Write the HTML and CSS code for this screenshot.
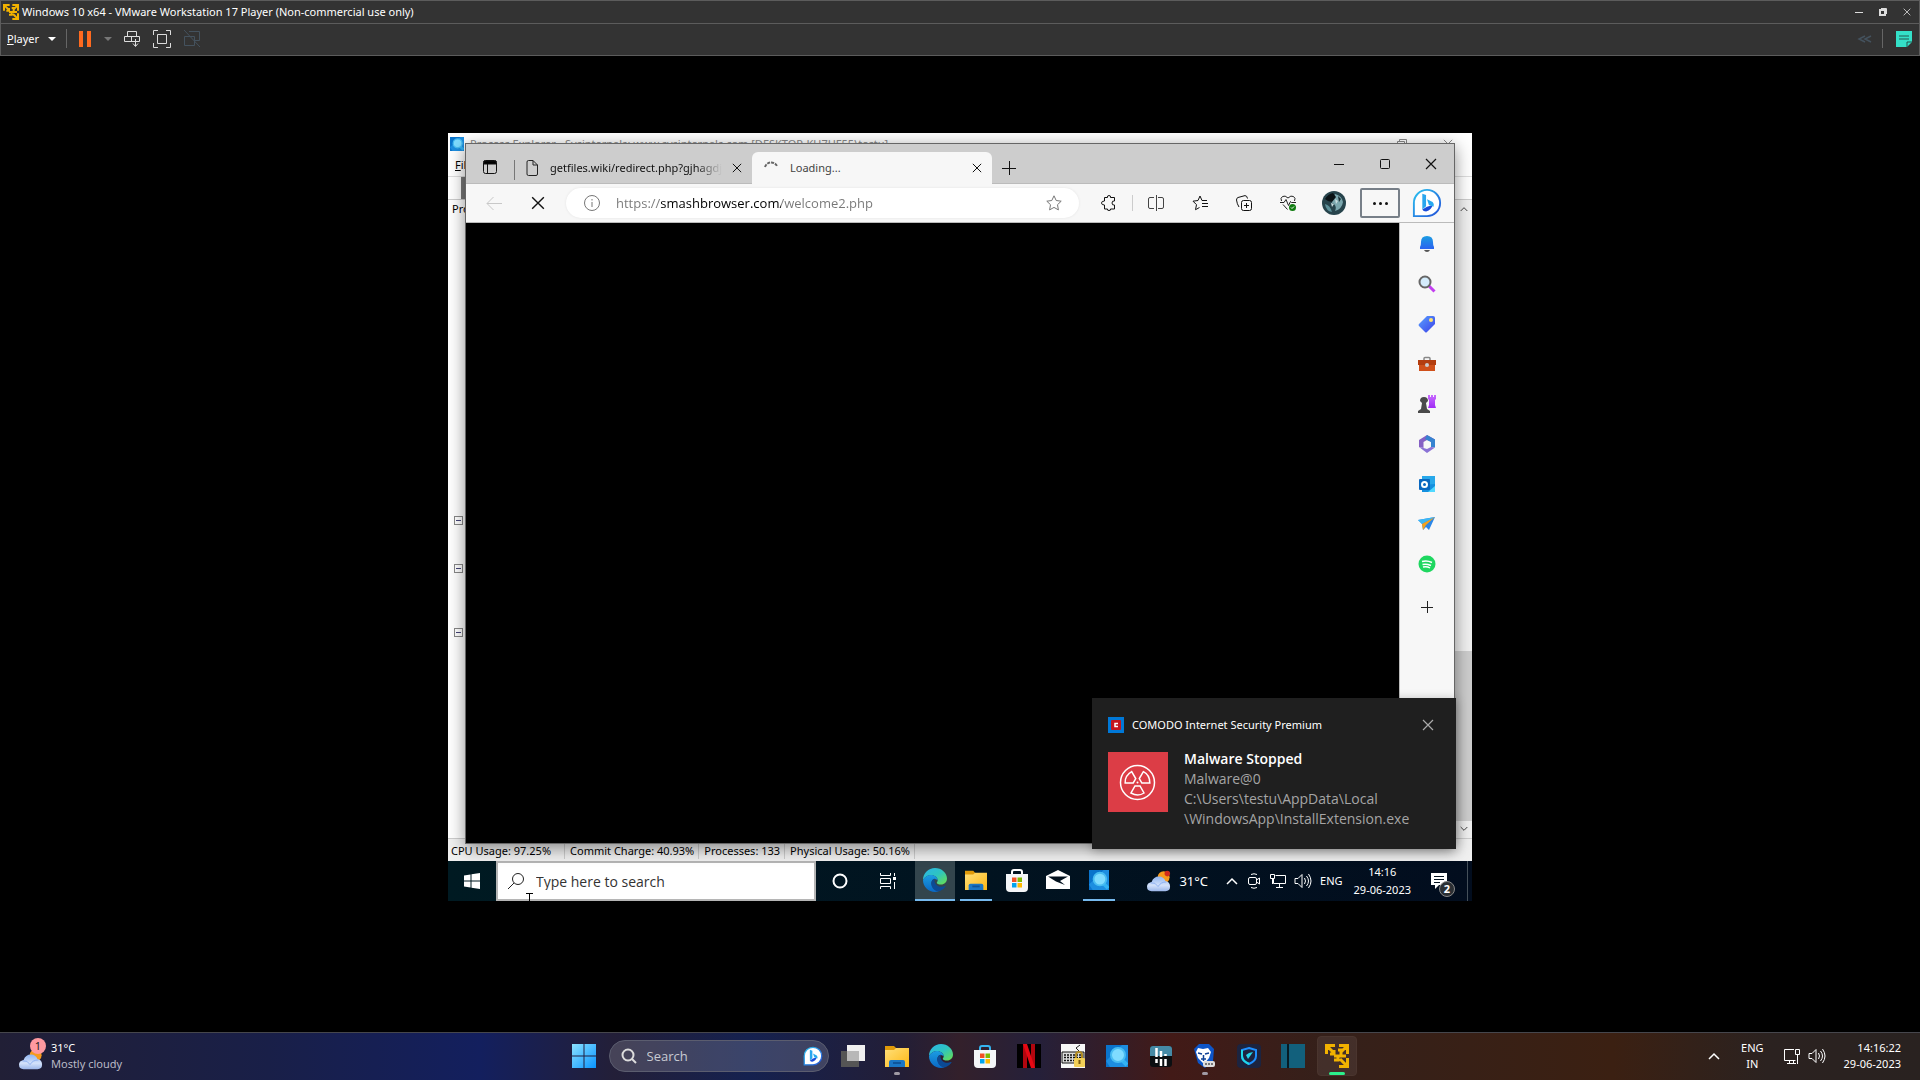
FILE: index.html
```html
<!DOCTYPE html>
<html lang="en">
<head>
    <meta charset="UTF-8">
    <meta name="viewport" content="width=device-width, initial-scale=1.0">
    <title>Windows 10 x64 - VMware Workstation 17 Player</title>
    <link rel="stylesheet" href="styles.css">
</head>
<body>
    <!-- Shared icons -->
    <svg class="sprite" aria-hidden="true">
        <defs>
            <linearGradient id="gTeal" x1="0" y1="0" x2="1" y2="1"><stop offset="0" stop-color="#2bb5e8"/><stop offset=".5" stop-color="#2ec4c0"/><stop offset="1" stop-color="#6be04a"/></linearGradient>
            <linearGradient id="gBlue" x1="0" y1="0" x2="0" y2="1"><stop offset="0" stop-color="#1b9de2"/><stop offset="1" stop-color="#0a68c4"/></linearGradient>
            <linearGradient id="gBell" x1="0" y1="0" x2="0" y2="1"><stop offset="0" stop-color="#1b9de2"/><stop offset="1" stop-color="#2b62f0"/></linearGradient>
            <linearGradient id="gBing" x1="0" y1="0" x2="1" y2="1"><stop offset="0" stop-color="#2bc4f0"/><stop offset="1" stop-color="#2350d8"/></linearGradient>
            <linearGradient id="gWin" x1="0" y1="0" x2="1" y2="1"><stop offset="0" stop-color="#8be2ff"/><stop offset="1" stop-color="#0994ff"/></linearGradient>
            <linearGradient id="gCloud" x1="0" y1="0" x2="0" y2="1"><stop offset="0" stop-color="#8fb4f0"/><stop offset=".6" stop-color="#d3e2fb"/><stop offset="1" stop-color="#9cb7ea"/></linearGradient>
            <linearGradient id="gFolder" x1="0" y1="0" x2="1" y2="1"><stop offset="0" stop-color="#ffe07a"/><stop offset="1" stop-color="#fdb714"/></linearGradient>
            <linearGradient id="gTag" x1="0" y1="0" x2="1" y2="1"><stop offset="0" stop-color="#5aa2ff"/><stop offset="1" stop-color="#3b3fe8"/></linearGradient>
            <linearGradient id="gPink" x1="0" y1="0" x2="0" y2="1"><stop offset="0" stop-color="#c86bff"/><stop offset="1" stop-color="#a02bf5"/></linearGradient>
        </defs>
        <symbol id="vmware" viewBox="0 0 24 24">
            <path d="M1.500 10V1.500H10M14 1.500h8.500V10M22.500 14v8.500H14M2 2l7 7M22 2l-6 6M22 22l-7-7M5 10H9V6M9 12h4v4H9M13 6h3v6h5" fill="none" stroke="#f2b200" stroke-width="3"/>
        </symbol>
        <symbol id="edge" viewBox="0 0 24 24">
            <path d="M0 12C0 5 5.500 0 12 0s12 5 12 10.500c0 3.500-2.500 6-6 6-2.500 0-4.200-.8-4.200-1.800 0-.6.9-1 .9-2.500C14.700 9.500 11.500 7 8 7S1.500 9 0 12z" fill="url(#gTeal)"/>
            <path d="M0 12C1.500 9 4.500 7 8 7c3.500 0 6.700 2.500 6.700 5.200C10 9 8 13 8.500 16c.6 4 4 6.800 7.500 7.200C8 26 0 20 0 12z" fill="url(#gBlue)"/>
            <path d="M12 10.500c-3 .9-4.300 4-3.400 7.200 1.200 4.300 5.400 6.300 8.400 5.300 2.500-.9 4.500-2.500 5.500-4.400.2-.6-.2-.7-.6-.5-3 1.400-6.900.8-8.900-1.600-1.700-2-1.900-4.200-1-6z" fill="#0c4a94"/>
        </symbol>
        <symbol id="store" viewBox="0 0 24 24">
            <path d="M7 7V4q0-2 2-2h6q2 0 2 2v3" fill="none" stroke="currentColor" stroke-width="2"/>
            <path d="M1 6h22v14q0 4-4 4H5q-4 0-4-4z" fill="#f4f6f8"/>
            <path d="M7 9.500h4.500V14H7z" fill="#f25022"/><path d="M12.500 9.500H17V14h-4.500z" fill="#7fba00"/>
            <path d="M7 15h4.500v4.500H7z" fill="#00a4ef"/><path d="M12.500 15H17v4.500h-4.500z" fill="#ffb900"/>
        </symbol>
        <symbol id="folder" viewBox="0 0 24 24">
            <path d="M0 2h9l2 2v4H0z" fill="#e09a09"/><path d="M0 6h9l2-2h13v19H0z" fill="url(#gFolder)"/>
            <path d="M4 23v-5q0-2 2-2h12q2 0 2 2v5z" fill="#1a76c5"/><path d="M8 19h8" stroke="#0e559b" stroke-width="2"/>
        </symbol>
        <symbol id="procexp" viewBox="0 0 22 22">
            <path d="M0 0h22v22H0z" fill="#0a74cc"/><path d="M0 16L16 0H22v22H4z" fill="#1d8ee0"/>
            <path d="M15 14l6 6" stroke="#33b3f3" stroke-width="4"/><circle cx="12" cy="10" r="7" fill="#7fdcff" stroke="#48bdf2" stroke-width="2"/>
        </symbol>
        <symbol id="cloud" viewBox="0 0 26 24">
            <circle cx="18" cy="8" r="6.500" fill="#f79a1c"/>
            <path d="M5 23q-5 0-5-5 0-4 5-5 2-6 8-6 5 0 7 5 5 1 5 6 0 5-5 5z" fill="url(#gCloud)"/>
            <path d="M4 14q5-1 8 4 3-5 9-5" fill="none" stroke="#8aaef0"/>
        </symbol>
        <symbol id="bing" viewBox="0 0 32 32">
            <path d="M2 30V16A14 14 0 1 1 16 30z" fill="#fff" stroke="url(#gBing)" stroke-width="2"/>
            <path d="M11 6l4 1.500v12l-4 3.500z" fill="#2aa6ee"/><path d="M11 23l5-3 6-2q-1 5-7 7-3 0-4-2z" fill="#1a4bd8"/><path d="M16 12l6 3q2 2 1 5l-5-2z" fill="#27a9ef"/>
        </symbol>
        <symbol id="speaker" viewBox="0 0 18 16">
            <path d="M1 5.500h3l4-4v13l-4-4H1zM10.500 5q2 3 0 6M12.500 3q4 5 0 10M14.500 1q5 7 0 14" fill="none" stroke="currentColor"/>
        </symbol>
        <symbol id="close" viewBox="0 0 12 12"><path d="M1 1l10 10M11 1L1 11" fill="none" stroke="currentColor" stroke-width="1.200"/></symbol>
        <symbol id="up" viewBox="0 0 12 8"><path d="M1 7l5-5 5 5" fill="none" stroke="currentColor" stroke-width="1.500"/></symbol>
    </svg>

    <header class="player">
        <div class="player-title">
            <svg class="i16"><use href="#vmware"/></svg>
            <h1>Windows 10 x64 - VMware Workstation 17 Player (Non-commercial use only)</h1>
            <div class="player-controls">
                <button aria-label="Minimize"><svg class="i8" viewBox="0 0 8 8"><path d="M0 4.500h8" stroke="#ddd"/></svg></button>
                <button aria-label="Restore"><svg class="i8" viewBox="0 0 8 8"><path d="M1 2h5v5H1z" fill="none" stroke="#ddd" stroke-width="2"/><path d="M2 .5h5.500V6" fill="none" stroke="#ddd"/></svg></button>
                <button aria-label="Close"><svg class="i8"><use href="#close"/></svg></button>
            </div>
        </div>
        <nav class="player-bar">
            <button class="player-menu"><u>P</u>layer <i class="caret"></i></button>
            <span class="divider"></span>
            <button class="pause" aria-label="Suspend"><span></span><span></span></button>
            <button class="drop" aria-label="Power options"><i class="caret dim"></i></button>
            <button aria-label="Send Ctrl+Alt+Del"><svg class="i18" viewBox="0 0 18 18"><path d="M4.500 6.500v-5h9v5M1.500 11.500v-5h15v5zM8.500 6.500v5M12.500 9v7M10 13.500l2.500 3 2.500-3" fill="none" stroke="#ddd"/></svg></button>
            <button aria-label="Full screen"><svg class="i18" viewBox="0 0 18 18"><path d="M.5 5V.5H5M13 .5h4.500V5M17.500 13v4.500H13M5 17.500H.5V13M4.500 4.500h9v9h-9z" fill="none" stroke="#ddd"/></svg></button>
            <button aria-label="Unity"><svg class="i18" viewBox="0 0 18 18"><path d="M6 1.500h10.500v9h-5M1.500 6.500h10v9h-10zM1 0l16 17" fill="none" stroke="#44525e"/></svg></button>
            <button class="push" aria-label="Devices"><svg class="i16" viewBox="0 0 16 16"><path d="M8 5L2 8l6 3M14 5L8 8l6 3" fill="none" stroke="#44525e" stroke-width="1.500"/></svg></button>
            <span class="divider"></span>
            <button aria-label="Messages"><svg class="i16" viewBox="0 0 16 16"><path d="M0 0h16v11l-5 5H0z" fill="#34e0c8"/><path d="M3 5h10M3 8h10M11 16v-5h5" fill="none" stroke="#22574f"/></svg></button>
        </nav>
    </header>

    <main class="stage">
        <div class="guest">
            <section class="procexp">
                <div class="px-title">
                    <svg class="i14"><use href="#procexp"/></svg>
                    <span>Process Explorer - Sysinternals: www.sysinternals.com [DESKTOP-KU7HF55\testu]</span>
                    <svg class="i10" viewBox="0 0 10 10"><path d="M.5 2.500h7v7h-7zM2.500 2V.5h7v7H8" fill="none" stroke="#888"/></svg>
                    <svg class="i10"><use href="#close"/></svg>
                </div>
                <div class="px-menu"><u>F</u>ile</div>
                <div class="px-tools"></div>
                <div class="px-body">
                    <div class="px-tree">
                        <span class="px-head">Process</span>
                        <button class="twig" aria-label="Collapse"></button>
                        <button class="twig" aria-label="Collapse"></button>
                        <button class="twig" aria-label="Collapse"></button>
                    </div>
                    <div class="px-scroll">
                        <svg class="i8"><use href="#up"/></svg>
                        <span class="px-thumb"></span>
                        <svg class="i8 down"><use href="#up"/></svg>
                    </div>
                </div>
                <div class="px-status">
                    <span>CPU Usage: 97.25%</span><span>Commit Charge: 40.93%</span><span>Processes: 133</span><span>Physical Usage: 50.16%</span>
                </div>
            </section>

            <section class="browser">
                <div class="tabs">
                    <button class="workspaces" aria-label="Tab actions"><svg class="i14" viewBox="0 0 14 14"><rect x=".5" y=".5" width="13" height="13" rx="2" fill="none" stroke="#111"/><path d="M1 1h12v3H1zM4.500 4v9" stroke="#111"/></svg></button>
                    <div class="tab">
                        <svg class="doc" viewBox="0 0 12 16"><path d="M1 2q0-1.500 1.500-1.500H7L11.500 5v9q0 1.500-1.500 1.500H2.500Q1 15.500 1 14zM7 .5V5h4.500" fill="none" stroke="#222"/></svg>
                        <span class="tab-name fade">getfiles.wiki/redirect.php?gjhagdj</span>
                        <button aria-label="Close tab"><svg class="i10"><use href="#close"/></svg></button>
                    </div>
                    <div class="tab active">
                        <svg class="spinner" viewBox="0 0 14 14"><path d="M1 6A6.500 6.500 0 0 1 13 5" fill="none" stroke="#666" stroke-width="2" stroke-dasharray="3 1"/></svg>
                        <span class="tab-name">Loading...</span>
                        <button aria-label="Close tab"><svg class="i10"><use href="#close"/></svg></button>
                    </div>
                    <button class="new-tab" aria-label="New tab"><svg class="i14" viewBox="0 0 14 14"><path d="M7.500 0v14M0 7.500h14" stroke="#111"/></svg></button>
                    <div class="win-controls">
                        <button aria-label="Minimize"><svg class="i10" viewBox="0 0 10 10"><path d="M0 5.500h10" stroke="#111"/></svg></button>
                        <button aria-label="Maximize"><svg class="i10" viewBox="0 0 10 10"><rect x=".5" y=".5" width="9" height="9" rx="1" fill="none" stroke="#111"/></svg></button>
                        <button aria-label="Close"><svg class="i12"><use href="#close"/></svg></button>
                    </div>
                </div>
                <div class="toolbar">
                    <button class="nav back" aria-label="Back"><svg class="i16" viewBox="0 0 16 16"><path d="M16 8.500H1M7.500 2L1 8.500 7.500 15" fill="none" stroke="#c8c8c8"/></svg></button>
                    <button class="nav" aria-label="Stop"><svg class="i14"><use href="#close"/></svg></button>
                    <div class="address">
                        <svg class="i16" viewBox="0 0 16 16"><circle cx="8" cy="8" r="7.500" fill="none" stroke="#777"/><path d="M8 7v5M8 4v1.500" stroke="#777"/></svg>
                        <input class="url" type="text" aria-label="Address" value="https://smashbrowser.com/welcome2.php">
                        <button aria-label="Favorite"><svg class="i16" viewBox="0 0 16 16"><path d="M8 .8l2.200 4.700 5 .7-3.700 3.500.9 5.200L8 12.400l-4.400 2.500.9-5.200L.8 6.200l5-.7z" fill="none" stroke="#777"/></svg></button>
                    </div>
                    <button aria-label="Extensions"><svg class="i16" viewBox="0 0 16 16"><path d="M3.500 2.500h3q-.5-2 1.500-2t1.500 2h4V6q-2.500-.5-2.500 2t2.500 2v4h-4q.5 1.500-1.500 1.500T6.500 14h-3v-4Q.5 10 .5 8t3-2z" fill="none" stroke="#111"/></svg></button>
                    <span class="bar"></span>
                    <button aria-label="Split screen"><svg class="i16" viewBox="0 0 16 16"><path d="M6 2.500H2q-1.500 0-1.500 1.500v8q0 1.500 1.500 1.500h4M10 2.500h4q1.500 0 1.500 1.500v8q0 1.500-1.500 1.500h-4M8.500 0v16" fill="none" stroke="#444"/></svg></button>
                    <button aria-label="Favorites"><svg class="i16" viewBox="0 0 16 16"><path d="M15 5.500h-5L8 1 6 5.500l-5 .7 3.500 3.500-1 5 4-2.200M10 8.500h6M10 11.500h6" fill="none" stroke="#111"/></svg></button>
                    <button aria-label="Collections"><svg class="i16" viewBox="0 0 16 16"><rect x="5.500" y="5.500" width="10" height="10" rx="2" fill="none" stroke="#111"/><path d="M10.500 8v5M8 10.500h5M3 12q-2-3-2.500-7Q.5 3 2 2.500L9 .6q2 0 2.500 2.900" fill="none" stroke="#111"/></svg></button>
                    <button aria-label="Browser essentials"><svg class="i16" viewBox="0 0 16 16"><path d="M1.500 6Q0 3 2.500 1.500T8 3q3-3 5.500-1.500T14.500 6M0 7.500h4l2-3 2.500 6 2-4 1 1H16M3 9.500l4.500 5" fill="none" stroke="#222"/><circle cx="12.500" cy="12.500" r="3.500" fill="#107c10"/><path d="M11 12.500l1 1 2-2" fill="none" stroke="#fff"/></svg></button>
                    <button class="profile" aria-label="Profile"><svg class="i24" viewBox="0 0 24 24"><circle cx="12" cy="12" r="12" fill="#27444c"/><path d="M13 3q7 2 8 8-1 7-8 9 2-4-1-7-4-2-2-5z" fill="#7ba7ae"/><path d="M3 8q3-5 8-6l3 4-4 5-4-1z" fill="#0a1215"/><path d="M3 13q5 1 7 8-6-1-7-8z" fill="#5d919a"/><path d="M13 8l3 2-2 3zM9 12l3 1-2 3z" fill="#c9dcdf"/><path d="M16 5l3 3-2 3z" fill="#1a2e33"/></svg></button>
                    <button class="more" aria-label="Settings and more"><span></span><span></span><span></span></button>
                    <button class="discover" aria-label="Discover"><svg class="i30"><use href="#bing"/></svg></button>
                </div>
                <div class="view">
                    <div class="web-page"></div>
                    <aside class="sidebar">
                        <button aria-label="Notifications"><svg class="i18" viewBox="0 0 18 18"><path d="M2 12q1-1 1-5 0-6 6-6t6 6q0 4 1 5v2H2z" fill="url(#gBell)"/><path d="M6 15h6q-1 2-3 2t-3-2z" fill="#555"/></svg></button>
                        <button aria-label="Search"><svg class="i18" viewBox="0 0 18 18"><path d="M11 11l5.500 5.500" stroke="#c23ef0" stroke-width="3"/><circle cx="7" cy="7" r="5.500" fill="#d4ecfb" stroke="#666" stroke-width="2"/></svg></button>
                        <button aria-label="Shopping"><svg class="i18" viewBox="0 0 18 18"><path d="M1 9l8-8h6q2 0 2 2v6l-8 8q-1 1-2 0l-6-6q-1-1 0-2z" fill="url(#gTag)"/><circle cx="13" cy="5" r="2" fill="#ffe36e"/></svg></button>
                        <button aria-label="Tools"><svg class="i18" viewBox="0 0 18 18"><path d="M6 6V3.500q0-1 1-1h4q1 0 1 1V6" fill="none" stroke="#888" stroke-width="1.500"/><path d="M1 6h16v10H1z" fill="#d0501a"/><path d="M0 5h18v5H0z" fill="#b33d0f"/><circle cx="9" cy="10" r="2" fill="#ccc"/></svg></button>
                        <button aria-label="Games"><svg class="i18" viewBox="0 0 18 18"><path d="M10 0h2v2h1V0h2v2h1V0h2v4l-1 1v5l1 3h-8l1-3V5l-1-1z" fill="url(#gPink)"/><path d="M2 6a4 4 0 1 1 8 0L8 8l1 6 3 2v2H0v-2l3-2 1-6z" fill="#4a4a4a"/></svg></button>
                        <button aria-label="Microsoft 365"><svg class="i18" viewBox="0 0 18 18"><path d="M9 0l8 4.500v5L11.500 6 9 5 5.500 7v6L1 12V5z" fill="#8560c4"/><path d="M9 0l8 4.500v8L13 12V7L7 4z" fill="#3683d0"/><path d="M1 12l4.500 1L9 14l4-2 4 .5L9 18z" fill="#8a72d6"/></svg></button>
                        <button aria-label="Outlook"><svg class="i18" viewBox="0 0 18 18"><path d="M4 1h13v16H4z" fill="#28a8ea"/><path d="M4 10l13-1v8H4z" fill="#1490df"/><path d="M10 17l7-6v6z" fill="#50d9ff"/><rect x="1" y="4" width="11" height="11" rx="1" fill="#0a68c0"/><circle cx="6.500" cy="9.500" r="2.500" fill="none" stroke="#fff" stroke-width="2"/></svg></button>
                        <button aria-label="Drop"><svg class="i18" viewBox="0 0 18 18"><path d="M0 5l17-3-6 13-3-3-3 3-1-6z" fill="#2a86e8"/><path d="M0 5l17-3L4 9z" fill="#3cb8f5"/><path d="M4 9l13-7-9 8-3 5z" fill="#f5a21c"/></svg></button>
                        <button aria-label="Spotify"><svg class="i18" viewBox="0 0 18 18"><circle cx="9" cy="9" r="8.500" fill="#1ed760"/><path d="M4 6.500q5-1.500 10 1M4.500 9.500q4-1 8.500 1M5 12q4-1 7 1" fill="none" stroke="#fff" stroke-width="1.500"/></svg></button>
                        <button class="add" aria-label="Customize"><svg class="i12" viewBox="0 0 12 12"><path d="M6.500 0v12M0 6.500h12" stroke="#222"/></svg></button>
                    </aside>
                </div>
            </section>

            <section class="toast">
                <div class="toast-head">
                    <svg class="i16" viewBox="0 0 16 16"><path d="M0 0h16v16H0z" fill="#0078d7"/><rect x="3" y="3" width="10" height="10" rx="1" fill="#c4161c"/><path d="M10 6.500H7v3h3" fill="none" stroke="#fff" stroke-width="1.500"/></svg>
                    <span>COMODO Internet Security Premium</span>
                    <button aria-label="Dismiss"><svg class="i12"><use href="#close"/></svg></button>
                </div>
                <div class="toast-body">
                    <svg class="i60" viewBox="0 0 60 60"><path d="M0 0h60v60H0z" fill="#dc3d46"/><g fill="none" stroke="#fff" stroke-width="1.500"><circle cx="29.500" cy="30.500" r="17"/><g id="blade"><path d="M27 34h5l4 7q-6 4-13 0z"/></g><use href="#blade" transform="rotate(120 29.500 30.500)"/><use href="#blade" transform="rotate(240 29.500 30.500)"/></g><circle cx="29.500" cy="30.500" r="1" fill="#fff"/></svg>
                    <div>
                        <h2>Malware Stopped</h2>
                        <p>Malware@0</p>
                        <p>C:\Users\testu\AppData\Local<br>\WindowsApp\InstallExtension.exe</p>
                    </div>
                </div>
            </section>

            <footer class="guest-bar">
                <button class="g-start" aria-label="Start"><svg class="i16" viewBox="0 0 16 16"><path d="M0 2.500l6.500-1V7.500H0zM7.500 1.300L16 0v7.500H7.500zM0 8.500h6.500v6L0 13.500zM7.500 8.500H16V16l-8.500-1.300z" fill="#fff"/></svg></button>
                <label class="g-search">
                    <svg class="i16" viewBox="0 0 16 16"><circle cx="10" cy="6" r="5.500" fill="none" stroke="#222"/><path d="M6 10l-6 6" stroke="#222"/></svg>
                    <input type="text" aria-label="Type here to search" placeholder="Type here to search">
                </label>
                <button class="g-wide" aria-label="Cortana"><svg class="i16" viewBox="0 0 16 16"><circle cx="8" cy="8" r="6.500" fill="none" stroke="#fff" stroke-width="2"/></svg></button>
                <button class="g-wide" aria-label="Task View"><svg class="i16" viewBox="0 0 16 16"><path d="M.5 0v2.500h10V0M.5 5.500h10v5H.5zM.5 16v-2.500h10V16M14.500 0v3M14.500 9v7" fill="none" stroke="#fff"/><path d="M13 4h3v3h-3z" fill="#fff"/></svg></button>
                <button class="g-app current" aria-label="Microsoft Edge"><svg class="i24"><use href="#edge"/></svg></button>
                <button class="g-app open" aria-label="File Explorer"><svg class="i22"><use href="#folder"/></svg></button>
                <button class="g-app" aria-label="Microsoft Store"><svg class="i24"><use href="#store"/></svg></button>
                <button class="g-app" aria-label="Mail"><svg class="i24" viewBox="0 0 24 24"><path d="M0 8l12-6 12 6v13H0z" fill="#fff"/><path d="M2 8.500h20L14 13l5 4-9-3.500z" fill="#02111e"/></svg></button>
                <button class="g-app open" aria-label="Process Explorer"><svg class="i20"><use href="#procexp"/></svg></button>
                <div class="g-tray">
                    <button class="weather"><svg class="i24" viewBox="0 0 26 24"><use href="#cloud"/><circle cx="22" cy="4" r="3" fill="#d02b1c"/></svg>31°C</button>
                    <svg class="i12"><use href="#up"/></svg>
                    <svg class="i16" viewBox="0 0 16 16"><rect x="2.500" y="4.500" width="8" height="7" rx="1.500" fill="none" stroke="#fff"/><path d="M10.500 7l3-2v6l-3-2M5 1.500q3-1.500 6 0M5 14.500q3 1.500 6 0" fill="none" stroke="#fff"/></svg>
                    <svg class="i16" viewBox="0 0 16 16"><path d="M5.500 2.500h10v8h-12V6M9.500 11v3M6 14.500h7M.5 1.500h4v4h-4zM2.500 5v6" fill="none" stroke="#fff"/></svg>
                    <svg class="speaker"><use href="#speaker"/></svg>
                    <span>ENG</span>
                    <time>14:16<br>29-06-2023</time>
                    <button class="alerts" aria-label="Notifications"><svg class="i16" viewBox="0 0 16 16"><path d="M0 0h16v12H8l-4 4v-4H0z" fill="#fff"/><path d="M3 3.500h10M3 6.500h10M3 9.500h6" stroke="#02111e"/></svg><b class="badge">2</b></button>
                </div>
            </footer>
            <svg class="text-cursor" viewBox="0 0 7 8"><path d="M0 .5h7M3.500 0v8" stroke="#000"/></svg>
        </div>
    </main>

    <footer class="host-bar">
        <button class="host-weather">
            <span class="cloud-box"><svg class="i24"><use href="#cloud"/></svg><b>1</b></span>
            <span>31°C<br><span class="muted">Mostly cloudy</span></span>
        </button>
        <div class="host-apps">
            <button aria-label="Start"><svg class="i24" viewBox="0 0 24 24"><path d="M0 0h11.500v11.500H0zM12.500 0H24v11.500H12.500zM0 12.500h11.500V24H0zM12.500 12.500H24V24H12.500z" fill="url(#gWin)"/></svg></button>
            <label class="host-search">
                <svg class="i16" viewBox="0 0 16 16"><circle cx="7" cy="7" r="5.500" fill="none" stroke="#ddd" stroke-width="2"/><path d="M11 11l4 4" stroke="#ddd" stroke-width="2"/></svg>
                <input type="text" aria-label="Search" placeholder="Search">
                <svg class="i20"><use href="#bing"/></svg>
            </label>
            <button aria-label="Task View"><svg class="i24" viewBox="0 0 24 24"><path d="M6 1h18v16H6z" fill="#f0f0f0"/><path d="M0 7h18v16H0z" fill="#555"/><path d="M6 7h12v10H6z" fill="#b8b8b8"/></svg></button>
            <button class="running" aria-label="File Explorer"><svg class="i24"><use href="#folder"/></svg></button>
            <button aria-label="Microsoft Edge"><svg class="i24"><use href="#edge"/></svg></button>
            <button class="store" aria-label="Microsoft Store"><svg class="i24"><use href="#store"/></svg></button>
            <button aria-label="Netflix"><svg class="i24" viewBox="0 0 24 24"><path d="M0 0h24v24H0z"/><path d="M6 0h4v24H6zM14 0h4v24h-4z" fill="#b1060f"/><path d="M6 0h4l8 24h-4z" fill="#e50914"/></svg></button>
            <button aria-label="Keyboard lock"><svg class="i24" viewBox="0 0 24 24"><path d="M0 0h24v24H0z" fill="#f8f8f8"/><path d="M19 1l-4 3 3 3" fill="none" stroke="#222"/><path d="M1 8h22v11H1z" fill="#ddd" stroke="#111"/><path d="M3 11h18M3 13.500h18M3 16.500h12" stroke="#111" stroke-width="1.500" stroke-dasharray="2 1"/><path d="M15 15v-4q0-3 3-3t3 3v4" fill="none" stroke="#b08a20" stroke-width="2"/><rect x="13" y="14" width="11" height="9" rx="1" fill="#f2cf57"/><path d="M18.500 16v4" stroke="#7a5a10" stroke-width="2"/></svg></button>
            <button aria-label="Process Explorer"><svg class="i22"><use href="#procexp"/></svg></button>
            <button aria-label="Audio mixer"><svg class="i22" viewBox="0 0 22 22"><rect y="1" width="22" height="21" rx="3" fill="#0b0f12"/><path d="M0 11V4q0-3 3-3h16q3 0 3 3v7z" fill="#458aa6"/><path d="M6.500 3v9M11 6v6M15.500 9v2M6.500 14v4M11 14v7M15.500 14v7" stroke="#fff" stroke-width="2.500"/></svg></button>
            <button class="running" aria-label="Brave Beta"><svg class="i24" viewBox="0 0 24 24"><path d="M6 0h10l5 5-1 12-8 7-7-5L1 5z" fill="#0d55c8"/><path d="M5 4l5 1 5-1 3 4-2 6-5 6-6-6-2-6z" fill="#fff"/><path d="M5 9l4 1M16 9l-4 1M8 15h5M10.500 11v6" stroke="#0d3f94" stroke-width="1.500"/><rect x="10" y="17" width="12" height="6" rx="2" fill="#ddd"/><path d="M12 20h8" stroke="#777" stroke-width="2" stroke-dasharray="2 1"/></svg></button>
            <button aria-label="Security"><svg class="i24" viewBox="0 0 24 24"><rect width="24" height="24" rx="4" fill="#1c2440"/><path d="M12 4l7 2v6q0 5-7 8-7-3-7-8V6z" fill="none" stroke="#1f8fff" stroke-width="2"/><path d="M5 6v6q0 5 7 8" fill="none" stroke="#1fd8e8" stroke-width="2"/><path d="M9 11l2 4 5-7-4 1z" fill="#25d6ea"/></svg></button>
            <button aria-label="Panels"><svg class="i24" viewBox="0 0 24 24"><path d="M0 0h24v24H0z" fill="#12607c"/><path d="M7 0v24" stroke="#061b24" stroke-width="2"/></svg></button>
            <button class="running focused" aria-label="VMware Player"><svg class="i24"><use href="#vmware"/></svg></button>
        </div>
        <div class="host-tray">
            <svg class="i12"><use href="#up"/></svg>
            <span class="lang">ENG<br>IN</span>
            <svg class="i16" viewBox="0 0 16 16"><path d="M10 1.500H.5v11h11M3 15.500h9M5.500 13v2M9.500 13v2M11.500 1.500h4v5h-4zM13.500 7v9" fill="none" stroke="#fff"/></svg>
            <svg class="speaker"><use href="#speaker"/></svg>
            <time>14:16:22<br>29-06-2023</time>
        </div>
    </footer>
</body>
</html>
```
FILE: styles.css
```css
* {
    margin: 0;
    padding: 0;
    box-sizing: border-box;
}
body {
    display: flex;
    flex-direction: column;
    min-height: 100vh;
    background-color: #000;
    color: #fff;
    font-family: "Noto Sans", "Open Sans", sans-serif;
    font-size: 11px;
    line-height: 16px;
}
button, input {
    border: 0;
    background: none;
    color: inherit;
    font: inherit;
    outline: 0;
}
button {
    display: flex;
    align-items: center;
    justify-content: center;
    flex-shrink: 0;
}
svg { display: block; flex-shrink: 0; }
.sprite { position: absolute; width: 0; height: 0; }
.i8 { width: 8px; height: 8px; }
.i10 { width: 10px; height: 10px; }
.i12 { width: 12px; height: 12px; }
.i14 { width: 14px; height: 14px; }
.i16 { width: 16px; height: 16px; }
.i18 { width: 18px; height: 18px; }
.i20 { width: 20px; height: 20px; }
.i22 { width: 22px; height: 22px; }
.i24 { width: 24px; height: 24px; }
.i30 { width: 30px; height: 30px; }
.i60 { width: 60px; height: 60px; }
.speaker { width: 18px; height: 16px; }

/* VMware Player frame */
.player {
    background-color: #333;
    border: 1px solid #5c5c5c;
}
.player-title {
    display: flex;
    align-items: center;
    gap: 3px;
    height: 22px;
    padding-left: 2px;
}
h1 {
    font-size: 11px;
    font-weight: 400;
}
.player-controls {
    display: flex;
    margin-left: auto;
}
.player-controls button { width: 24px; height: 22px; color: #ddd; }
.player-bar {
    display: flex;
    align-items: center;
    height: 32px;
    border-top: 1px solid #5c5c5c;
    padding: 0 1px 2px 6px;
}
.player-bar button { width: 30px; height: 28px; }
.player-bar .player-menu { width: auto; margin-right: 10px; }
.caret {
    margin-left: 9px;
    border: 4px solid transparent;
    border-top-color: #fff;
    border-bottom: 0;
}
.caret.dim { margin: 0; border-top-color: #777; }
.divider { width: 1px; height: 19px; background-color: #666; }
.player-bar .pause { width: 36px; gap: 4px; }
.pause span { width: 4px; height: 16px; background-color: #ff6a1f; }
.player-bar .drop { width: 10px; margin-right: 4px; }
.player-bar .push { margin-left: auto; width: 34px; }
.player-bar button:last-child { width: 28px; margin-left: 7px; }

/* Guest display */
.stage {
    flex: 1;
    display: flex;
    align-items: center;
    justify-content: center;
    padding-bottom: 54px;
}
.guest {
    position: relative;
    display: flex;
    flex-direction: column;
    width: 1024px;
    max-width: 100%;
    aspect-ratio: 4 / 3;
    overflow: hidden;
}

/* Process Explorer, behind the browser */
.procexp {
    flex: 1;
    display: flex;
    flex-direction: column;
    background-color: #fff;
    color: #000;
}
.px-title {
    display: flex;
    align-items: center;
    gap: 36px;
    height: 22px;
    padding: 0 19px 0 2px;
    color: #888;
}
.px-title span { margin-left: -30px; flex: 1; }
.px-menu { height: 21px; padding: 2px 0 0 7px; }
.px-tools {
    height: 24px;
    border-top: 1px solid #ddd;
    border-bottom: 1px solid #ccc;
    background: linear-gradient(90deg, #fff 13px, #777 13px, #777 18px, #fff 18px);
}
.px-body { flex: 1; display: flex; border-bottom: 1px solid #ccc; }
.px-tree {
    flex: 1;
    display: flex;
    flex-direction: column;
    align-items: flex-start;
    padding-left: 4px;
}
.px-head { height: 316px; padding-top: 1px; }
.twig {
    width: 9px;
    height: 9px;
    margin-left: 2px;
    border: 1px solid #888;
    background: linear-gradient(#447, #447) center / 5px 1px no-repeat;
}
.twig + .twig { margin-top: 39px; }
.twig + .twig + .twig { margin-top: 55px; }
.px-scroll {
    display: flex;
    flex-direction: column;
    align-items: center;
    width: 17px;
    padding: 5px 0;
    background-color: #f0f0f0;
    color: #444;
}
.px-thumb { width: 17px; height: 170px; margin: auto 0 4px; background-color: #cdcdcd; }
.down { transform: rotate(180deg); }
.px-status {
    display: flex;
    align-items: center;
    height: 22px;
    padding-top: 1px;
    background-color: #f0f0f0;
}
.px-status span { padding: 0 4px 0 5px; border-right: 1px solid #ccc; }
.px-status span:first-child { padding: 0 13px 0 3px; }

/* Edge window */
.browser {
    position: absolute;
    top: 10px;
    right: 17px;
    bottom: 57px;
    left: 17px;
    display: flex;
    flex-direction: column;
    border: 1px solid #666;
    background-color: #f7f7f7;
    box-shadow: 0 4px 16px rgba(0, 0, 0, .45);
    color: #111;
}
.tabs {
    display: flex;
    align-items: flex-end;
    height: 40px;
    background-color: #cdcdcd;
    border-bottom: 1px solid #bbb;
}
.workspaces { width: 48px; height: 32px; }
.tab {
    display: flex;
    align-items: center;
    width: 238px;
    height: 32px;
    margin-bottom: -1px;
    padding-left: 12px;
}
.tab:not(.active) { background: linear-gradient(#777, #777) 0 8px / 1px 20px no-repeat; }
.tab.active {
    width: 240px;
    border-radius: 6px 6px 0 0;
    background-color: #f7f7f7;
    color: #444;
}
.doc { width: 12px; height: 16px; }
.spinner { width: 14px; height: 14px; }
.tab-name { flex: 1; margin-left: 12px; overflow: hidden; white-space: nowrap; }
.fade { mask-image: linear-gradient(90deg, #000 85%, transparent); }
.tab button { width: 30px; height: 30px; color: #111; }
.new-tab { width: 34px; height: 30px; }
.win-controls { display: flex; align-self: flex-start; margin-left: auto; }
.win-controls button { width: 46px; height: 40px; }
.toolbar {
    display: flex;
    align-items: center;
    height: 39px;
    padding-left: 5px;
    border-bottom: 1px solid #bbb;
}
.toolbar button { width: 44px; height: 30px; }
.toolbar .back { width: 46px; }
.toolbar .nav + .nav { width: 42px; margin-right: 7px; }
.address {
    flex: 1;
    display: flex;
    align-items: center;
    min-width: 0;
    height: 30px;
    padding-left: 18px;
    margin-right: 8px;
    border-radius: 15px;
    background-color: #fff;
    box-shadow: 0 0 3px rgba(0, 0, 0, .08);
}
/* the host name is darker than the rest of the address */
.url {
    flex: 1;
    min-width: 0;
    margin-left: 16px;
    font-family: "Open Sans", sans-serif;
    font-size: 13px;
    color: transparent;
    background: linear-gradient(90deg, #777 45px, #000 45px, #000 165px, #777 165px);
    background-clip: text;
}
.address button { width: 50px; }
.bar { width: 1px; height: 16px; margin: 0 1px; background-color: #ccc; }
.toolbar .profile { width: 48px; }
.toolbar .more {
    width: 40px;
    gap: 3px;
    margin-left: 2px;
    border: 2px solid #777f88;
    border-radius: 2px;
}
.more span { width: 3px; height: 3px; border-radius: 50%; background-color: #111; }
.toolbar .discover { width: 54px; }
.view { flex: 1; display: flex; }
.web-page { flex: 1; background-color: #000; }
.sidebar {
    display: flex;
    flex-direction: column;
    width: 55px;
    padding-top: 1px;
    border-left: 1px solid #bbb;
}
.sidebar button { height: 40px; }
.sidebar .add { margin-top: 3px; }

/* Notification */
.toast {
    position: absolute;
    right: 16px;
    bottom: 52px;
    width: 364px;
    padding: 16px;
    background-color: #1f1f1f;
    box-shadow: 0 2px 10px rgba(0, 0, 0, .3);
}
.toast-head {
    display: flex;
    align-items: center;
    gap: 8px;
    height: 22px;
}
.toast-head button { width: 24px; height: 24px; margin-left: auto; color: #aaa; }
.toast-body {
    display: flex;
    gap: 16px;
    padding-top: 16px;
    height: 97px;
    color: #a5a5a5;
    font-family: "Open Sans", sans-serif;
    font-size: 14px;
    line-height: 20px;
}
.toast-body > div { margin-top: -3px; }
h2 {
    color: #fff;
    font-size: 14px;
    font-weight: 600;
}

/* Guest taskbar */
.guest-bar {
    display: flex;
    height: 40px;
    background: linear-gradient(90deg, #001a22, #020d1e);
}
.g-start { width: 48px; }
.g-search {
    display: flex;
    align-items: center;
    width: 320px;
    padding-left: 10px;
    gap: 12px;
    border: 2px solid #b5b5b5;
    background-color: #fff;
    color: #333;
    font-family: "Open Sans", sans-serif;
    font-size: 14px;
}
.g-search input { flex: 1; min-width: 0; padding-top: 1px; }
::placeholder { color: inherit; opacity: 1; }
.g-wide { width: 48px; }
.g-app { width: 41px; border-bottom: 2px solid transparent; }
.g-app.current { width: 40px; margin-left: 3px; border-color: #76b9ed; background-color: #33454d; }
.g-app.open {
    background: linear-gradient(#76b9ed, #76b9ed) center bottom / 32px 2px no-repeat border-box;
}
.g-tray {
    flex: 1;
    display: flex;
    align-items: center;
    justify-content: flex-end;
    gap: 8px;
    border-right: 1px solid #45505a;
    margin-right: 4px;
    padding-right: 16px;
}
.weather { gap: 8px; margin-right: 10px; font-size: 13px; }
.g-tray time {
    margin: 0 8px 0 3px;
    text-align: center;
    line-height: 18px;
}
.alerts { position: relative; width: 24px; height: 24px; }
.badge {
    position: absolute;
    right: -4px;
    bottom: -4px;
    width: 16px;
    height: 16px;
    border: 1px solid #888;
    border-radius: 50%;
    background-color: #2b2f33;
    line-height: 14px;
}
.text-cursor { position: absolute; left: 78px; bottom: 0; width: 7px; height: 8px; }

/* Host taskbar */
.host-bar {
    display: grid;
    grid-template-columns: 1fr auto 1fr;
    align-items: center;
    height: 48px;
    padding-bottom: 2px;
    border-top: 1px solid #46464c;
    background: linear-gradient(90deg, #211f36 0, #191f48 14%, #131f5e 25%, #231f38 32%, #15214f 39%, #231e36 47%, #33202b 50%, #25203a 54%, #421a17 61%, #35201a 69%, #3b2012 84%, #2b2220 92%, #292220 100%);
}
.host-weather { justify-self: start; gap: 8px; padding-left: 19px; text-align: left; }
.cloud-box { position: relative; padding-top: 6px; }
.cloud-box b {
    position: absolute;
    top: -3px;
    right: -3px;
    width: 16px;
    height: 16px;
    border-radius: 50%;
    background-color: #ff9aa0;
    color: #222;
    font-weight: 400;
    text-align: center;
}
.muted { color: #b9bac6; }
.host-apps { display: flex; align-items: center; }
.host-apps button {
    position: relative;
    width: 44px;
    height: 40px;
}
.host-apps .store { color: #35b4ef; }
.host-search {
    display: flex;
    align-items: center;
    gap: 10px;
    width: 220px;
    height: 32px;
    margin: 0 2px 0 3px;
    padding: 0 5px 0 11px;
    border: 1px solid #5b5d6f;
    border-radius: 16px;
    background-color: rgba(255, 255, 255, .16);
    color: #c8cad2;
    font-family: "Open Sans", sans-serif;
    font-size: 13px;
}
.host-search input { flex: 1; min-width: 0; }
.running::after {
    content: "";
    position: absolute;
    bottom: 1px;
    width: 6px;
    height: 3px;
    border-radius: 2px;
    background-color: #a09aa4;
}
.host-apps .focused {
    width: 40px;
    margin: 0 2px;
    border: 1px solid #4a352e;
    border-radius: 4px;
    background-color: rgba(255, 255, 255, .07);
}
.focused::after { bottom: 0; width: 16px; background-color: #2cf08c; }
.host-tray {
    display: flex;
    align-items: center;
    justify-content: flex-end;
    padding-right: 19px;
}
.lang { margin: 0 20px 0 21px; text-align: center; }
.host-tray .speaker { margin: 0 18px 0 8px; }
.host-tray time { text-align: right; }
```
